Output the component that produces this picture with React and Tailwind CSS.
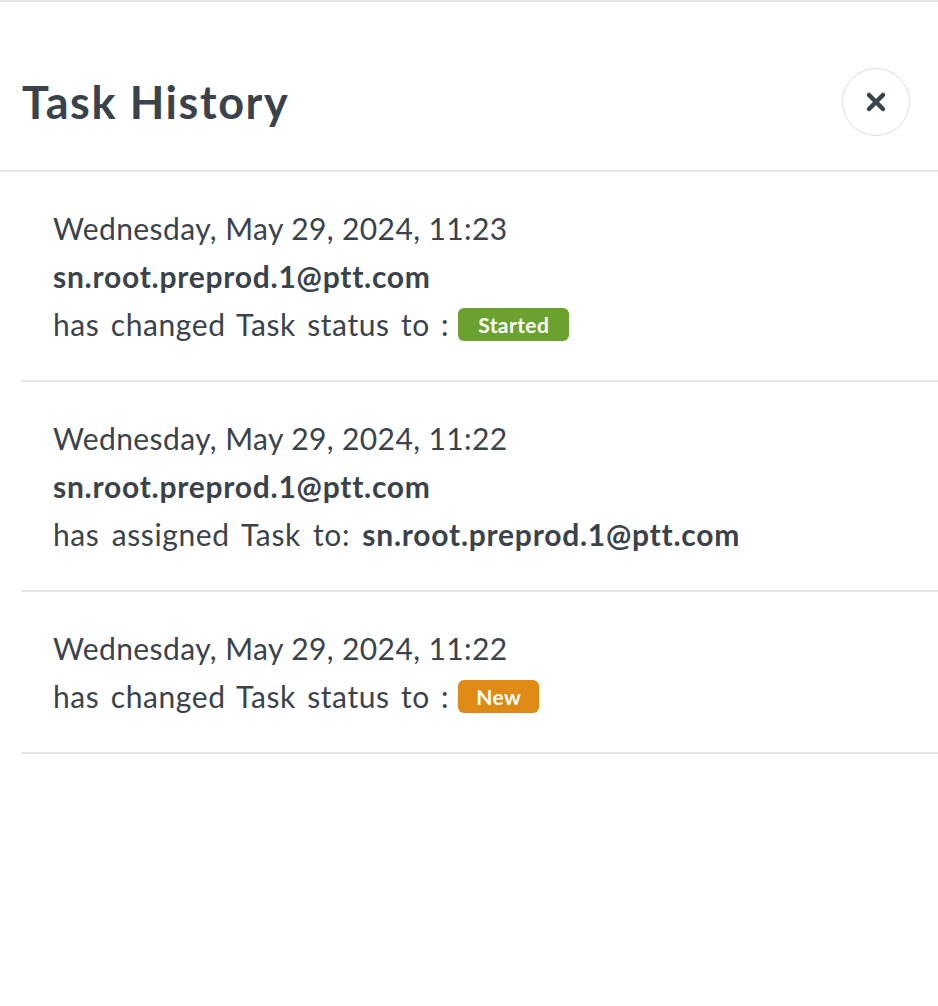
import React from 'react'

const rows = [
  {
    date: 'Wednesday, May 29, 2024, 11:23',
    user: 'sn.root.preprod.1@ptt.com',
    action: 'status',
    status: { label: 'Started', cls: 'bg-[#6ba22f] w-[111px]' },
  },
  {
    date: 'Wednesday, May 29, 2024, 11:22',
    user: 'sn.root.preprod.1@ptt.com',
    action: 'assign',
    assignee: 'sn.root.preprod.1@ptt.com',
  },
  {
    date: 'Wednesday, May 29, 2024, 11:22',
    action: 'status',
    status: { label: 'New', cls: 'bg-[#e08a16] w-[81px]' },
  },
]

function CloseIcon() {
  return (
    <svg width="22" height="22" viewBox="0 0 22 22" fill="none">
      <path d="M4 4L18 18M18 4L4 18" stroke="#3a434b" strokeWidth="4.5" strokeLinecap="round" />
    </svg>
  )
}

export default function App() {
  return (
    <div className="min-h-screen bg-white text-[#3a434b] font-['Lato','Liberation_Sans',sans-serif] border-t-2 border-[#e3e3e3]">
      <div className="flex items-center justify-between border-b-2 border-[#e3e3e3] pl-[22px] pr-[28px] pt-[66px] pb-[34px]">
        <h1 className="text-[45px] font-bold leading-none tracking-[1.6px]">Task History</h1>
        <button
          type="button"
          className="flex h-[68px] w-[68px] items-center justify-center rounded-full border border-[#dcdcdc]"
        >
          <CloseIcon />
        </button>
      </div>

      <div className="ml-[21px]">
        {rows.map((r, i) => (
          <div key={i} className="border-b-2 border-[#e3e3e3] pl-[32px] pt-[32px] pb-[32px] text-[30px] leading-[48px] tracking-[0.6px]">
            <div className="tracking-[0.4px]">{r.date}</div>
            {r.user && <div className="font-bold tracking-[0.75px]">{r.user}</div>}
            {r.action === 'status' ? (
              <div className="flex items-center">
                <span className="[word-spacing:3px]">has changed Task status to :</span>
                <span
                  className={`ml-[9px] inline-flex h-[33px] items-center justify-center rounded-[6px] text-[21px] font-bold leading-none tracking-[0.4px] text-white ${r.status.cls}`}
                >
                  {r.status.label}
                </span>
              </div>
            ) : (
              <div className="[word-spacing:4px]">
                has assigned Task to: <span className="font-bold tracking-[0.75px] [word-spacing:0px]">{r.assignee}</span>
              </div>
            )}
          </div>
        ))}
      </div>
    </div>
  )
}
